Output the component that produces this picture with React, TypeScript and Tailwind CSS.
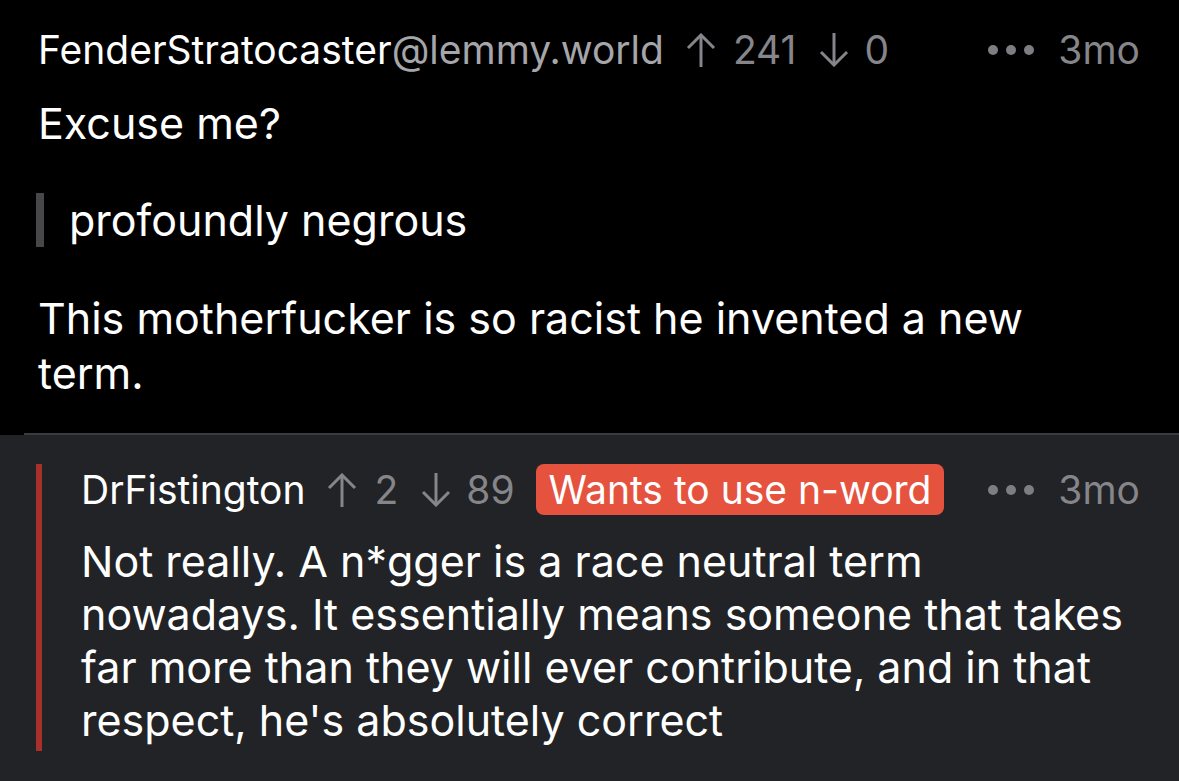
const font = { fontFamily: 'Inter, "Noto Sans", sans-serif' };

function Arrow({ down = false }: { down?: boolean }) {
    return (
        <svg width="32" height="34" viewBox="0 0 32 34" fill="none" stroke="currentColor" strokeWidth="3" strokeLinecap="butt" strokeLinejoin="miter">
            {down ? (
                <>
                    <path d="M16 0 V32" />
                    <path d="M3 19 L16 32 L29 19" />
                </>
            ) : (
                <>
                    <path d="M16 2 V34" />
                    <path d="M3 15 L16 2 L29 15" />
                </>
            )}
        </svg>
    );
}

function Dots() {
    return (
        <span className="flex items-center gap-[8px] mr-[24px]">
            <span className="w-[10px] h-[10px] rounded-full bg-[#7e7e82]" />
            <span className="w-[10px] h-[10px] rounded-full bg-[#7e7e82]" />
            <span className="w-[10px] h-[10px] rounded-full bg-[#7e7e82]" />
        </span>
    );
}

function Votes({ up, down }: { up: number; down: number }) {
    return (
        <div className="flex items-center text-[#85858a]">
            <span className="ml-[21px] mr-[16px]"><Arrow /></span>
            <span>{up}</span>
            <span className="ml-[22px] mr-[14px]"><Arrow down /></span>
            <span>{down}</span>
        </div>
    );
}

export default function App() {
    return (
        <div className="w-[1179px] h-[781px] overflow-hidden bg-black text-white" style={font}>
            {/* parent comment */}
            <div className="pl-[38px] pr-[39px] pt-[26px] pb-[32px]">
                <div className="flex items-center text-[39px] leading-[48px] whitespace-nowrap">
                    <span className="text-white">FenderStratocaster</span>
                    <span className="text-[#a6a6aa]">@lemmy.world</span>
                    <Votes up={241} down={0} />
                    <div className="ml-auto flex items-center text-[#85858a]">
                        <Dots />
                        <span>3mo</span>
                    </div>
                </div>
                <p className="text-[43px] leading-[54px] mt-[22px]">Excuse me?</p>
                <div className="flex items-center mt-[43px]">
                    <div className="w-[8px] h-[54px] -ml-[2px] bg-[#474749]" />
                    <p className="text-[43px] leading-[54px] ml-[25px]">profoundly negrous</p>
                </div>
                <p className="text-[43px] leading-[55px] mt-[44px] whitespace-nowrap">
                    This motherfucker is so racist he invented a new
                    <br />
                    term.
                </p>
            </div>
            {/* reply */}
            <div className="ml-[24px] h-[2px] bg-[#3b3b3e]" />
            <div className="bg-[#222326] h-[400px] pt-[29px] pl-[36px] pr-[39px]">
                <div className="flex border-l-[6px] border-[#a8302b] pl-[39px] h-[287px]">
                    <div className="flex-1">
                        <div className="flex items-center text-[39px] leading-[51px] whitespace-nowrap">
                            <span className="text-white">DrFistington</span>
                            <Votes up={2} down={89} />
                            <span className="ml-[21px] bg-[#e5533f] text-white rounded-[8px] px-[13px]">Wants to use n-word</span>
                            <div className="ml-auto flex items-center text-[#85858a]">
                                <Dots />
                                <span>3mo</span>
                            </div>
                        </div>
                        <p className="text-[43px] leading-[53px] mt-[20px] whitespace-nowrap">
                            Not really. A n*gger is a race neutral term
                            <br />
                            nowadays. It essentially means someone that takes
                            <br />
                            far more than they will ever contribute, and in that
                            <br />
                            respect, he's absolutely correct
                        </p>
                    </div>
                </div>
            </div>
        </div>
    );
}
